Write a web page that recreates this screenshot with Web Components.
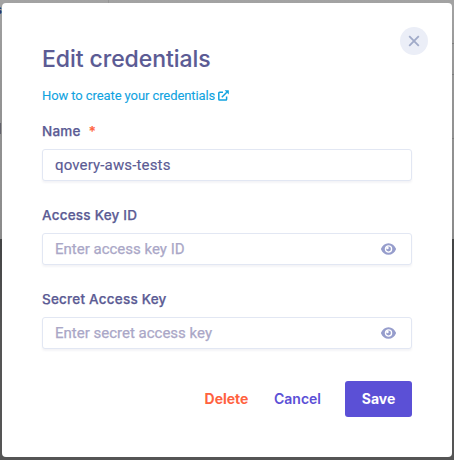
<!DOCTYPE html>
<html lang="en"><head><meta charset="utf-8"><title>Edit credentials</title>
<style>
html,body{margin:0;height:100%;overflow:hidden}
body{font-family:Inter,"Liberation Sans",sans-serif;color:#5b5b94}
</style></head>
<body>
<app-backdrop>
  <modal-card heading="Edit credentials">
    <help-link slot="help">How to create your credentials</help-link>
    <form-field label="Name" required value="qovery-aws-tests"></form-field>
    <form-field label="Access Key ID" placeholder="Enter access key ID" secret></form-field>
    <form-field label="Secret Access Key" placeholder="Enter secret access key" secret></form-field>
    <action-button slot="actions" kind="delete">Delete</action-button>
    <action-button slot="actions" kind="cancel">Cancel</action-button>
    <action-button slot="actions" kind="save">Save</action-button>
  </modal-card>
</app-backdrop>
<script>
class Base extends HTMLElement{
  connectedCallback(){
    if(!this.shadowRoot)this.attachShadow({mode:'open'}).innerHTML='<style>*{box-sizing:border-box}:host{box-sizing:border-box}</style>'+this.view();
  }
}
customElements.define('app-backdrop',class extends Base{
  view(){return `<style>
  :host{display:block;width:454px;height:460px;padding:3px 2px;position:relative;overflow:hidden;background:linear-gradient(#a3a3a3 0,#969696 70px,#8b8b8b 239px,#434445 239px,#555 330px,#555 100%)}
  .line{position:absolute;right:0;width:2px;height:1px;background:#7d7d7d}
  .edge{position:absolute;left:0;top:3px;width:2px;height:14px;overflow:hidden;direction:rtl;font:bold 12px/14px "Liberation Sans";color:#263268}
  .bar{position:absolute;left:0;top:123px;width:1px;height:11px;background:#62626b}
  .tick{position:absolute;left:108px;top:0;width:1px;height:3px;background:#959595}
  </style><i class="line" style="top:43px"></i><i class="line" style="top:74px"></i><i class="line" style="top:138px"></i>
  <i class="tick"></i><i class="bar"></i><span class="edge">s</span><slot></slot>`}
});
customElements.define('modal-card',class extends Base{
  view(){return `<style>
  :host{display:block;position:relative;height:454px;padding:40px;background:#fff;border-radius:4px}
  h1{margin:0;font-size:23px;line-height:32px;font-weight:500;letter-spacing:-.06px;-webkit-text-stroke:.1px}
  .close{position:absolute;top:24px;right:24px;width:28px;height:28px;padding:0;border:0;border-radius:50%;background:#ebeef7;display:grid;place-items:center}
  .help{display:flex;margin-top:11px;height:20px}
  .fields{display:grid;gap:24px;margin-top:15px}
  footer{display:flex;justify-content:flex-end;align-items:center;margin-top:32px}
  </style><h1>${this.getAttribute('heading')}</h1>
  <button class="close" aria-label="Close"><svg width="12" height="12" viewBox="0 0 12 12"><path d="M1.2 1.2l9.6 9.6M10.8 1.2l-9.6 9.6" stroke="#a0aac8" stroke-width="1.8"/></svg></button>
  <div class="help"><slot name="help"></slot></div>
  <div class="fields"><slot></slot></div><footer><slot name="actions"></slot></footer>`}
});
customElements.define('help-link',class extends Base{
  view(){return `<style>
  :host{display:flex;align-items:center;gap:3px;color:#10a3df;font:400 13px/20px Roboto,sans-serif;letter-spacing:-.09px;-webkit-text-stroke:.1px}
  svg{margin-top:-2px}
  </style><span><slot></slot></span><svg width="11" height="11" viewBox="0 0 11 11" fill="none" stroke="currentColor" stroke-width="1.5"><path d="M5 2.3H1.6a.8.8 0 0 0-.8.8v6.2a.8.8 0 0 0 .8.8h6.2a.8.8 0 0 0 .8-.8V6.4M3.8 7.2L8.8 2.2"/><path d="M6.6.2H10.8V4.4z" fill="currentColor" stroke="none"/></svg>`}
});
customElements.define('form-field',class extends Base{
  view(){const a=n=>this.getAttribute(n)||'';return `<style>
  :host{display:block}
  label{display:flex;gap:8px;height:20px;margin-bottom:8px;font-size:13.5px;line-height:20px;font-weight:500;letter-spacing:.22px;-webkit-text-stroke:.25px}
  .req{color:#ff6240}
  .box{display:flex;align-items:center;justify-content:space-between;height:32px;padding:0 15px 0 12px;border:1px solid #e2e7f3;border-radius:3px;background:#fff;box-shadow:0 2px 2px rgba(30,40,90,.05);font:400 15px/30px Roboto,sans-serif}
  .val{letter-spacing:.15px;-webkit-text-stroke:.15px}
  .ph{color:#aaa7c7;-webkit-text-stroke:.25px}
  </style><label><span>${a('label')}</span>${this.hasAttribute('required')?'<span class="req">*</span>':''}</label>
  <div class="box"><span class="${a('value')?'val':'ph'}">${a('value')||a('placeholder')}</span>
  ${this.hasAttribute('secret')?'<svg width="15" height="12" viewBox="0 0 15 12"><path d="M7.5.2C4 .2 1.4 2.4.1 5.5a1.2 1.2 0 0 0 0 1C1.4 9.6 4 11.8 7.5 11.8s6.1-2.2 7.4-5.3a1.2 1.2 0 0 0 0-1C13.6 2.4 11 .2 7.5.2z" fill="#969dcc"/><circle cx="7.5" cy="6" r="3.1" fill="#969dcc" stroke="#fff" stroke-width="1.3"/><circle cx="6.4" cy="4.9" r="1.3" fill="#fff"/></svg>':''}</div>`}
});
customElements.define('action-button',class extends Base{
  view(){return `<style>
  :host{display:block}
  button{display:block;height:36px;margin:0;padding:0;border:0;background:none;color:#5b50d6;font:600 14px/36px Inter,sans-serif;white-space:nowrap}
  :host([kind=delete]) button{color:#ff6240;width:45px;margin-right:25px;font-weight:700}
  :host([kind=cancel]) button{width:47px;margin-right:24px;letter-spacing:-.02px}
  :host([kind=save]) button{width:67px;background:#5b50d6;color:#fff;border-radius:3px;font-weight:700}
  </style><button><slot></slot></button>`}
});
</script></body></html>
